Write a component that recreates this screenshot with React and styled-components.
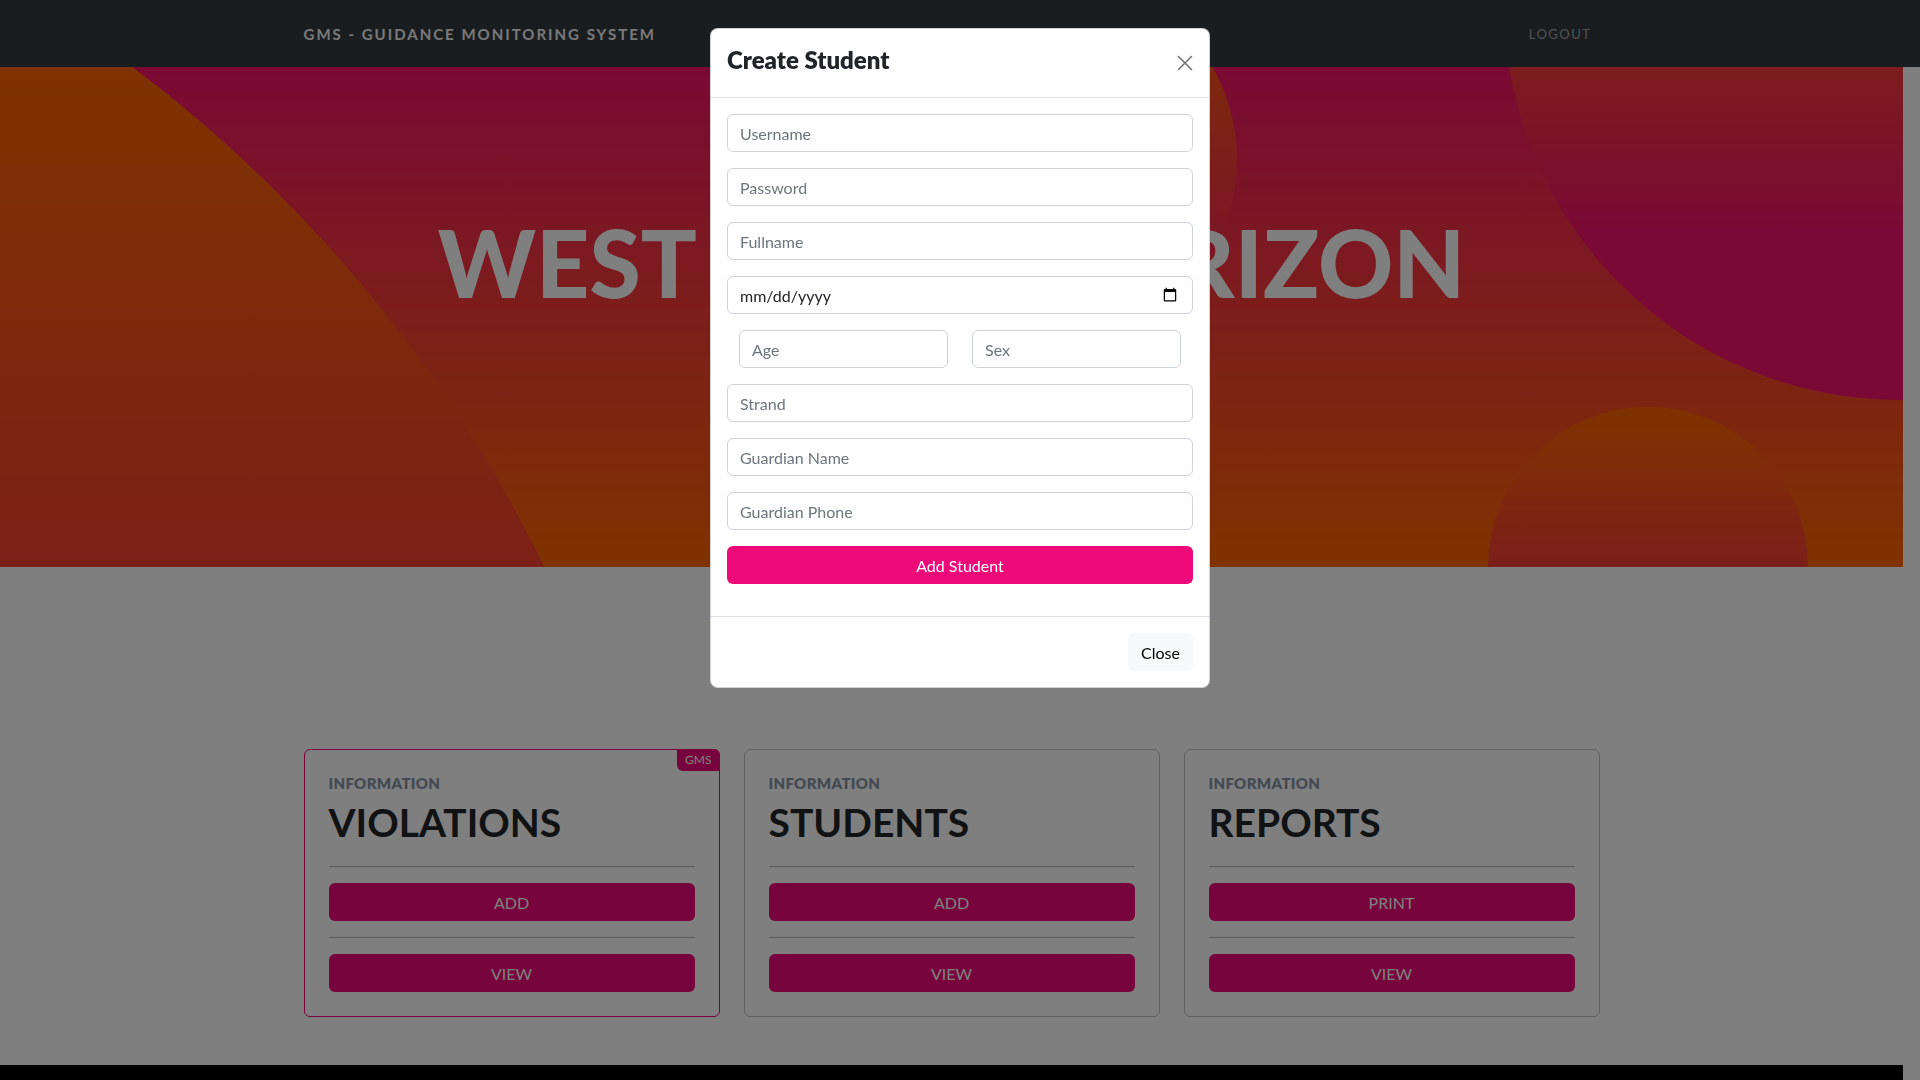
import React from "react";
import styled, { createGlobalStyle } from "styled-components";

const PINK = "#ee0979";

const GlobalStyle = createGlobalStyle`
  html, body {
    margin: 0;
    padding: 0;
    background: #ffffff;
    overflow: hidden;
    font-family: "Lato", "Open Sans", Arial, sans-serif;
  }
  * {
    box-sizing: border-box;
  }
`;

const cards = [
  { title: "VIOLATIONS", first: "ADD", active: true },
  { title: "STUDENTS", first: "ADD" },
  { title: "REPORTS", first: "PRINT" },
];

function HeroArt() {
  return (
    <Art viewBox="0 0 1903 500" preserveAspectRatio="none">
      <defs>
        <linearGradient id="bg" x1="0" y1="0" x2="0" y2="500" gradientUnits="userSpaceOnUse">
          <stop offset="0" stopColor="#f4146a" />
          <stop offset="1" stopColor="#ff6600" />
        </linearGradient>
        <linearGradient id="left" x1="0" y1="0" x2="0" y2="1100" gradientUnits="userSpaceOnUse">
          <stop offset="0" stopColor="#ff6600" />
          <stop offset="1" stopColor="#f4146a" />
        </linearGradient>
        <linearGradient id="mid" x1="0" y1="-95" x2="0" y2="281" gradientUnits="userSpaceOnUse">
          <stop offset="0" stopColor="#ff6600" />
          <stop offset="1" stopColor="#f4146a" />
        </linearGradient>
        <linearGradient id="topRight" x1="0" y1="-200" x2="0" y2="160" gradientUnits="userSpaceOnUse">
          <stop offset="0" stopColor="#ff6600" />
          <stop offset="1" stopColor="#f4146a" />
        </linearGradient>
        <linearGradient id="bottomRight" x1="0" y1="340" x2="0" y2="660" gradientUnits="userSpaceOnUse">
          <stop offset="0" stopColor="#ff6600" />
          <stop offset="1" stopColor="#f4146a" />
        </linearGradient>
      </defs>
      <rect x="0" y="0" width="1903" height="500" fill="url(#bg)" />
      <circle cx="-697" cy="1103" r="1380" fill="url(#left)" />
      <circle cx="1049" cy="93" r="188" fill="url(#mid)" />
      <circle cx="1900" cy="-63" r="396" fill="url(#topRight)" />
      <circle cx="1648" cy="500" r="160" fill="url(#bottomRight)" />
    </Art>
  );
}

function InfoCard({ title, first, active }) {
  return (
    <Card $active={active}>
      {active && <Badge>GMS</Badge>}
      <Label>Information</Label>
      <CardTitle>{title}</CardTitle>
      <Rule />
      <CardButton>{first}</CardButton>
      <Rule />
      <CardButton>VIEW</CardButton>
    </Card>
  );
}

function CloseIcon() {
  return (
    <svg width="16" height="16" viewBox="0 0 16 16" fill="none">
      <path d="M1.5 1.5l13 13M14.5 1.5l-13 13" stroke="#000" strokeOpacity="0.55" strokeWidth="1.6" strokeLinecap="round" />
    </svg>
  );
}

export default function App() {
  return (
    <>
      <GlobalStyle />
      <Navbar>
        <NavInner>
          <Brand>GMS - GUIDANCE MONITORING SYSTEM</Brand>
          <NavLink>LOGOUT</NavLink>
        </NavInner>
      </Navbar>

      <Page>
        <Hero>
          <HeroArt />
          <HeroTitle>WEST PRIME HORIZON</HeroTitle>
        </Hero>

        <CardsSection>
          <Container>
            <CardGrid>
              {cards.map((c) => (
                <InfoCard key={c.title} {...c} />
              ))}
            </CardGrid>
          </Container>
        </CardsSection>

        <Footer />
      </Page>

      <Backdrop />

      <ModalLayer>
        <Dialog>
          <ModalHeader>
            <ModalTitle>Create Student</ModalTitle>
            <CloseX aria-label="Close">
              <CloseIcon />
            </CloseX>
          </ModalHeader>
          <ModalBody>
            <Field placeholder="Username" />
            <Field placeholder="Password" type="password" />
            <Field placeholder="Fullname" />
            <Field type="date" />
            <FieldRow>
              <FieldCol>
                <Field placeholder="Age" />
              </FieldCol>
              <FieldCol>
                <Field placeholder="Sex" />
              </FieldCol>
            </FieldRow>
            <Field placeholder="Strand" />
            <Field placeholder="Guardian Name" />
            <Field placeholder="Guardian Phone" />
            <SubmitButton>Add Student</SubmitButton>
          </ModalBody>
          <ModalFooter>
            <LightButton>Close</LightButton>
          </ModalFooter>
        </Dialog>
      </ModalLayer>
    </>
  );
}

const Navbar = styled.nav`
  height: 67px;
  background: #343a40;
  padding-right: 17px;
  display: flex;
  align-items: center;
`;

const NavInner = styled.div`
  width: 1320px;
  margin: 0 auto;
  padding: 0 12px;
  display: flex;
  justify-content: space-between;
  align-items: center;
`;

const Brand = styled.a`
  font-size: 15px;
  font-weight: 700;
  letter-spacing: 2px;
  color: #f2f2f2;
`;

const NavLink = styled.a`
  padding: 0 8px;
  font-size: 13px;
  letter-spacing: 1.5px;
  color: rgba(255, 255, 255, 0.55);
`;

const Page = styled.main`
  margin-right: 17px;
`;

const Hero = styled.section`
  position: relative;
  height: 500px;
  overflow: hidden;
  display: flex;
  justify-content: center;
  padding-top: 140px;
`;

const Art = styled.svg`
  position: absolute;
  inset: 0;
  width: 100%;
  height: 100%;
  display: block;
`;

const HeroTitle = styled.h1`
  position: relative;
  margin: 0;
  font-size: 93px;
  line-height: 1.2;
  font-weight: 900;
  color: #ffffff;
  white-space: nowrap;
`;

const CardsSection = styled.section`
  padding: 182px 0 48px;
`;

const Container = styled.div`
  width: 1320px;
  margin: 0 auto;
  padding: 0 12px;
`;

const CardGrid = styled.div`
  display: grid;
  grid-template-columns: repeat(3, 1fr);
  gap: 24px;
`;

const Card = styled.div`
  position: relative;
  border: 1px solid ${(p) => (p.$active ? PINK : "#c2c2c2")};
  border-radius: 6px;
  padding: 24px;
  background: #ffffff;
`;

const Badge = styled.span`
  position: absolute;
  top: -1px;
  right: -1px;
  background: ${PINK};
  color: #ffffff;
  font-size: 12px;
  line-height: 16px;
  padding: 3px 8px;
  border-radius: 0 6px 0 6px;
`;

const Label = styled.div`
  font-size: 15px;
  line-height: 18px;
  font-weight: 800;
  letter-spacing: 0.3px;
  text-transform: uppercase;
  color: #8a95a4;
  margin-bottom: 6px;
`;

const CardTitle = styled.h2`
  margin: 0 0 20px;
  font-size: 39px;
  line-height: 48px;
  font-weight: 700;
  color: #212529;
`;

const Rule = styled.hr`
  margin: 16px 0;
  height: 0;
  border: 0;
  border-top: 1px solid #b4b4b4;
`;

const CardButton = styled.button`
  display: block;
  width: 100%;
  height: 38px;
  border: 0;
  border-radius: 6px;
  background: ${PINK};
  color: #ffffff;
  font-family: "Lato", Arial, sans-serif;
  font-size: 16px;
`;

const Footer = styled.footer`
  height: 220px;
  background: #000000;
`;

const Backdrop = styled.div`
  position: fixed;
  inset: 0;
  background: rgba(0, 0, 0, 0.5);
`;

const ModalLayer = styled.div`
  position: fixed;
  inset: 0;
  overflow: hidden;
`;

const Dialog = styled.div`
  width: 500px;
  margin: 28px auto;
  background: #ffffff;
  border: 1px solid rgba(0, 0, 0, 0.175);
  border-radius: 8px;
`;

const ModalHeader = styled.div`
  height: 69px;
  padding: 0 16px;
  display: flex;
  align-items: center;
  justify-content: space-between;
  border-bottom: 1px solid #dee2e6;
`;

const ModalTitle = styled.h5`
  margin: 0 0 6px;
  font-size: 24px;
  line-height: 36px;
  font-weight: 800;
  color: #212529;
`;

const CloseX = styled.button`
  width: 16px;
  height: 16px;
  padding: 0;
  border: 0;
  background: transparent;
  display: flex;
`;

const ModalBody = styled.div`
  padding: 16px;
`;

const Field = styled.input`
  display: block;
  width: 100%;
  height: 38px;
  margin-bottom: 16px;
  padding: 6px 12px;
  border: 1px solid #ced4da;
  border-radius: 6px;
  font-family: "Lato", Arial, sans-serif;
  font-size: 16px;
  color: #212529;
  background: #ffffff;

  &::placeholder {
    color: #6c757d;
  }

  &::-webkit-datetime-edit-text,
  &::-webkit-datetime-edit-month-field,
  &::-webkit-datetime-edit-day-field,
  &::-webkit-datetime-edit-year-field {
    padding: 0;
  }
`;

const FieldRow = styled.div`
  display: grid;
  grid-template-columns: 1fr 1fr;
`;

const FieldCol = styled.div`
  padding: 0 12px;
`;

const SubmitButton = styled.button`
  display: block;
  width: 100%;
  height: 38px;
  margin-bottom: 16px;
  border: 0;
  border-radius: 6px;
  background: ${PINK};
  color: #ffffff;
  font-family: "Lato", Arial, sans-serif;
  font-size: 16px;
`;

const ModalFooter = styled.div`
  padding: 12px;
  display: flex;
  justify-content: flex-end;
  border-top: 1px solid #dee2e6;
`;

const LightButton = styled.button`
  margin: 4px;
  height: 38px;
  padding: 6px 12px;
  border: 1px solid #f8f9fa;
  border-radius: 6px;
  background: #f8f9fa;
  color: #000000;
  font-family: "Lato", Arial, sans-serif;
  font-size: 16px;
`;
